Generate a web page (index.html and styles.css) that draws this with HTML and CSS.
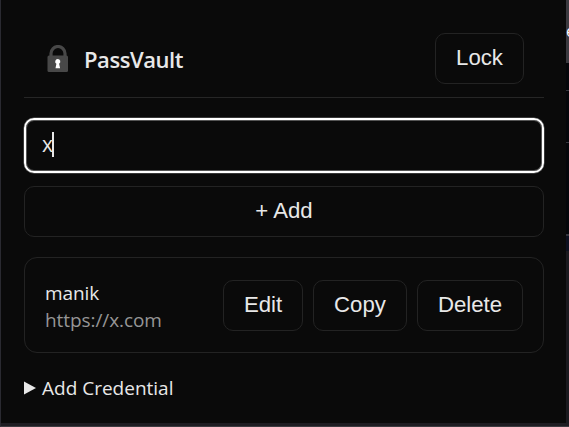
FILE: index.html
```html
<!DOCTYPE html>
<html lang="en">
<head>
<meta charset="utf-8">
<title>PassVault</title>
<link rel="stylesheet" href="styles.css">
</head>
<body>
<div class="backdrop">
  <main class="panel">
    <header class="header">
      <svg class="lock" width="22" height="28" viewBox="0 0 22 28">
        <path d="M4 12V8.500a7 7 0 0 1 14 0V12" fill="none" stroke="#484848" stroke-width="3.200"/>
        <rect x="0.500" y="10.500" width="20.500" height="16.500" rx="1.500" fill="#484848"/>
        <path d="M10.700 14a2.600 2.600 0 0 0-1.300 4.800L8.500 23.300h4.600L12.100 18.800A2.600 2.600 0 0 0 10.700 14z" fill="#fff"/>
      </svg>
      <h1 class="title">PassVault</h1>
      <button class="btn lock-btn">Lock</button>
    </header>
    <div class="search"><span class="query">x</span><span class="caret"></span></div>
    <button class="btn add-btn">+ Add</button>
    <section class="card">
      <div class="info">
        <div class="name">manik</div>
        <div class="url">https://x.com</div>
      </div>
      <button class="btn edit">Edit</button>
      <button class="btn copy">Copy</button>
      <button class="btn delete">Delete</button>
    </section>
    <div class="summary">
      <svg width="12" height="14" viewBox="0 0 12 14"><path d="M0 0.500L12 7 0 13.500z" fill="#e8e8e8"/></svg>
      <span>Add Credential</span>
    </div>
  </main>
  <aside class="edge"><span class="edge-top"><span class="edge-text">e</span></span><span class="edge-mid"></span><span class="edge-low"></span></aside>
</div>
</body>
</html>
```
FILE: styles.css
```css
* { box-sizing: border-box; }
body {
  margin: 0;
  background: #1e1d22;
  color: #e8e8e8;
  font-family: "Open Sans", "Noto Sans", sans-serif;
}
.backdrop {
  display: flex;
  width: 569px;
  height: 427px;
  overflow: hidden;
  border-left: 1px solid #2a2a31;
  border-bottom: 1px solid #3c3b40;
}
.panel {
  width: 565px;
  height: 423px;
  padding: 20px 22px 0 23px;
  background: #0a0a0a;
}
.header {
  display: flex;
  align-items: center;
  height: 78px;
  padding: 0 20px 0 23px;
  border-bottom: 1px solid #262626;
}
.lock { flex: none; }
.title {
  flex: 1;
  margin: 0 0 0 15px;
  font-size: 22px;
  font-weight: 600;
  line-height: 30px;
  letter-spacing: -0.45px;
}
.btn {
  height: 51px;
  padding: 0 0 1px;
  border: 1px solid #232323;
  border-radius: 10px;
  background: #0a0a0a;
  color: #e8e8e8;
  font: 22.200px "Liberation Sans", Arial, sans-serif;
}
.lock-btn { width: 89px; padding-bottom: 2px; }
.search {
  display: flex;
  align-items: center;
  height: 55px;
  margin-top: 20px;
  padding: 0 16px 3px;
  border: 2px solid #fff;
  border-radius: 10px;
  box-shadow: 0 0 0 0.500px #666, inset 0 0 0 1px #555;
  font-size: 21px;
}
.query { line-height: 28px; }
.caret { width: 2px; height: 25px; margin-left: -1px; background: #e8e8e8; }
.add-btn { display: block; width: 520px; margin-top: 13px; }
.card {
  display: flex;
  align-items: center;
  gap: 10px;
  height: 96px;
  margin-top: 20px;
  padding: 0 20px;
  border: 1px solid #232323;
  border-radius: 13px;
}
.info { flex: 1; padding-top: 3px; font-size: 19px; line-height: 27px; }
.name { letter-spacing: -0.1px; }
.url { color: #969696; letter-spacing: -0.08px; }
.edit { width: 80px; }
.copy { width: 94px; }
.delete { width: 106px; }
.summary {
  display: flex;
  align-items: center;
  gap: 6px;
  height: 28px;
  margin-top: 21px;
  font-size: 19px;
  line-height: 28px;
}
.edge {
  display: flex;
  flex-direction: column;
  width: 3px;
  height: 423px;
}
.edge-top {
  height: 63px;
  padding-top: 21px;
  background: #3b3a40;
  overflow: hidden;
}
.edge-text { display: block; font-size: 16px; line-height: 20px; color: #fff; }
.edge-mid { height: 188px; background: linear-gradient(#05060a 27px, #34353d 27px, #34353d 28px, #05060a 28px, #05060a 79px, #34353d 79px, #34353d 80px, #05060a 80px, #05060a 171px, #34353d 171px, #34353d 173px, #0d1020 173px); }
.edge-low { flex: 1; background: #1b1a1f; }
```
